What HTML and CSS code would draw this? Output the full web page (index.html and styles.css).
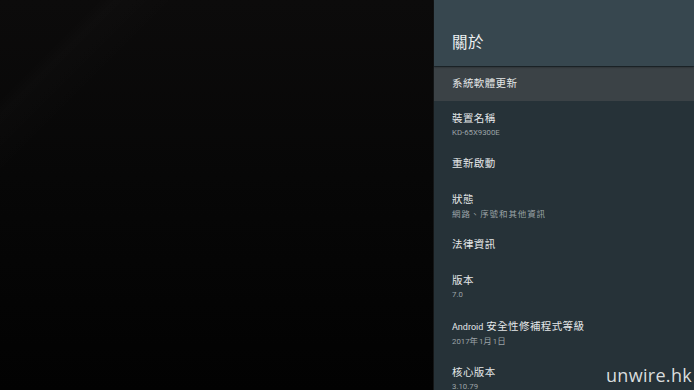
FILE: index.html
```html
<!DOCTYPE html>
<html lang="zh-Hant">
<head>
    <meta charset="UTF-8">
    <meta name="viewport" content="width=device-width, initial-scale=1.0">
    <title>關於</title>
    <link rel="stylesheet" href="styles.css">
</head>
<body>
    <div class="screen">
        <div class="backdrop"></div>
        <div class="panel">
            <div class="panel-header">
                <h1 class="panel-title">關於</h1>
            </div>
            <ul class="menu">
                <li class="item single selected"><span class="item-title">系統軟體更新</span></li>
                <li class="item">
                    <span class="item-title">裝置名稱</span>
                    <span class="item-sub">KD-65X9300E</span>
                </li>
                <li class="item single"><span class="item-title">重新啟動</span></li>
                <li class="item">
                    <span class="item-title">狀態</span>
                    <span class="item-sub cjk">網路、序號和其他資訊</span>
                </li>
                <li class="item single"><span class="item-title">法律資訊</span></li>
                <li class="item">
                    <span class="item-title">版本</span>
                    <span class="item-sub">7.0</span>
                </li>
                <li class="item">
                    <span class="item-title"><span class="latin">Android</span> 安全性修補程式等級</span>
                    <span class="item-sub">2017<span class="cjk">年</span>1<span class="cjk">月</span>1<span class="cjk">日</span></span>
                </li>
                <li class="item">
                    <span class="item-title">核心版本</span>
                    <span class="item-sub">3.10.79</span>
                </li>
            </ul>
        </div>
        <!-- site watermark on top of the photo -->
        <div class="watermark">unwire.hk</div>
    </div>
</body>
</html>
```
FILE: styles.css
```css
body {
    margin: 0;
    padding: 0;
    background-color: #000;
    font-family: Roboto, "Noto Sans CJK TC", sans-serif;
    overflow: hidden;
}
.screen {
    position: relative;
    display: flex;
    width: 694px;
    height: 390px;
    overflow: hidden;
}
.backdrop {
    flex: 0 0 434px;
    height: 100%;
    background:
        linear-gradient(135deg, rgba(255,255,255,0) 12%, rgba(255,255,255,0.012) 14%, rgba(255,255,255,0) 22%),
        linear-gradient(180deg, #0c0b0b 0%, #070707 45%, #020202 100%);
    border-right: 1px solid #141617;
    box-sizing: border-box;
}
.panel {
    flex: 1;
    height: 100%;
    background-color: #263238; /* blue grey body */
    display: flex;
    flex-direction: column;
}
.panel-header {
    flex-shrink: 0;
    height: 66px;
    background-color: #37474f;
    box-shadow: 0 1px 2px rgba(0,0,0,0.45);
    display: flex;
    align-items: flex-end;
    padding: 0 0 15px 18px;
    box-sizing: border-box;
    position: relative;
    z-index: 1;
}
.panel-title {
    margin: 0;
    color: #eceff1;
    font-size: 15.5px;
    font-weight: 400;
    line-height: 16px;
    letter-spacing: 0.5px;
}
.menu {
    list-style: none;
    margin: 1px 0 0 0;
    padding: 0;
}
.item {
    flex-shrink: 0;
    display: flex;
    flex-direction: column;
    padding: 10px 0 8px 18px;
    height: 46px;
    box-sizing: border-box;
}
.item.single {
    height: 35px;
    padding: 9px 0 9px 18px;
}
.item.selected {
    height: 34px;
    background-color: #3b4246;
}
.item-title {
    color: #e4e7e8;
    font-size: 10.5px;
    line-height: 16px;
    letter-spacing: 0.4px;
}
.item-sub {
    color: #9ca3a7;
    font-size: 7.8px;
    line-height: 12px;
    letter-spacing: 0;
}
.item-sub.cjk,
.item-sub .cjk {
    font-size: 8.5px;
    letter-spacing: 0.9px;
}
.latin {
    font-size: 9px;
    letter-spacing: 0;
}
.watermark {
    position: absolute;
    right: 2px;
    bottom: 3px;
    color: #d9dddd;
    font-family: "Open Sans", sans-serif;
    font-size: 18px;
    letter-spacing: 0.3px;
}
```
